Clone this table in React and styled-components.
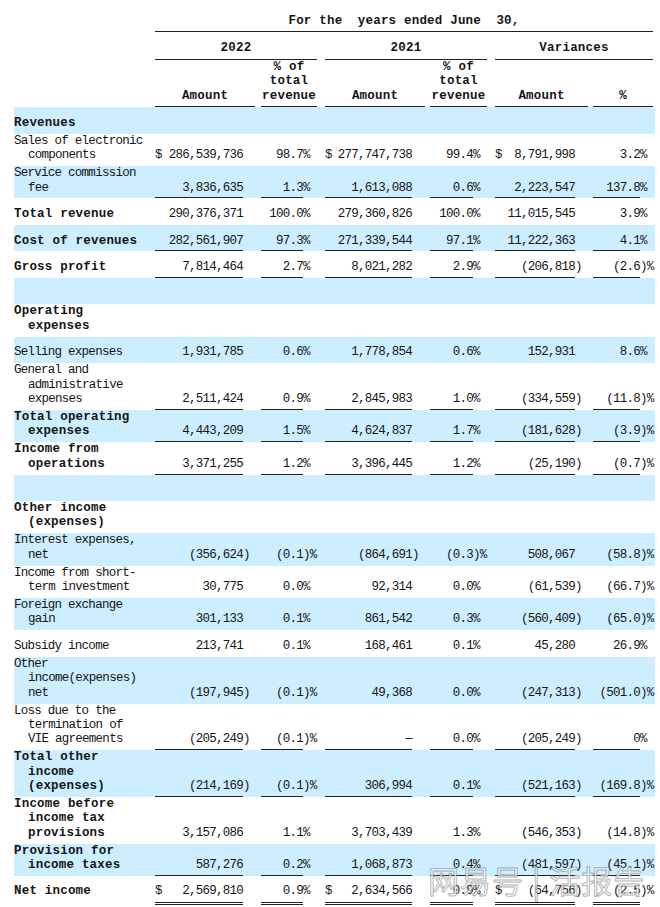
import React from "react";
import styled, { createGlobalStyle } from "styled-components";

const GlobalStyle = createGlobalStyle`
  html, body {
    margin: 0;
    padding: 0;
    background: #fff;
  }
  body {
    font-family: "Liberation Mono", "Courier New", monospace;
    color: #151515;
  }
`;

// label | 2022 amt | 2022 % | 2021 amt | 2021 % | var amt | var %
const COLS = "141px 100px 62px 108px 62px 101px 67px";

const Page = styled.div`
  position: relative;
  width: 660px;
  height: 907px;
  overflow: hidden;
  box-sizing: border-box;
  padding: 13.75px 0 0 14px;
  font-size: 12.5px;
  line-height: 14.4px;
`;

const Head = styled.div`
  display: grid;
  grid-template-columns: ${COLS};
  width: 641px;
  font-weight: bold;
  letter-spacing: 0.2px;
`;

const HeadCell = styled.div`
  grid-column: ${(p) => p.$span};
  grid-row: ${(p) => p.$row};
  margin-left: ${(p) => p.$gap || 0}px;
  margin-right: ${(p) => p.$end || 0}px;
  padding: ${(p) => p.$pad};
  border-bottom: 1px solid #222;
  display: flex;
  flex-direction: column;
  justify-content: flex-end;
  align-items: center;
  text-align: center;
  white-space: pre;
`;

const Row = styled.div`
  display: grid;
  grid-template-columns: ${COLS};
  width: 641px;
  min-height: ${(p) => p.$h}px;
  background: ${(p) => (p.$blue ? "#cceeff" : "transparent")};
`;

const Label = styled.div`
  align-self: end;
  padding-bottom: ${(p) => p.$pb}px;
  font-weight: ${(p) => (p.$bold ? "bold" : "normal")};
  letter-spacing: ${(p) => (p.$bold ? "0.2px" : "-0.74px")};
  white-space: nowrap;
`;

const LabelLine = styled.div`
  & + & {
    padding-left: 14px;
  }
`;

const Cell = styled.div`
  display: flex;
  margin-left: ${(p) => p.$gap}px;
  letter-spacing: -0.74px;
  white-space: nowrap;
`;

const Val = styled.div`
  flex: 1;
  min-width: 0;
  display: flex;
  justify-content: ${(p) => (p.$dollar ? "space-between" : "flex-end")};
  align-items: flex-end;
  padding-bottom: ${(p) => p.$pb}px;
  border-bottom: ${(p) =>
    p.$line === "double" ? "3px double #222" : p.$line ? "1px solid #222" : "none"};
`;

const Suffix = styled.div`
  width: ${(p) => p.$w}px;
  flex: none;
  display: flex;
  align-items: flex-end;
  padding-bottom: ${(p) => p.$pb}px;
`;

const Watermark = styled.div`
  position: absolute;
  left: 428px;
  top: 860px;
  font-family: "Noto Sans CJK SC", sans-serif;
  font-size: 31px;
  line-height: 40px;
  letter-spacing: 1px;
  color: rgba(255, 255, 255, 0.72);
  -webkit-text-stroke: 1px rgba(100, 100, 100, 0.5);
  white-space: pre;
  pointer-events: none;
`;

// gap before each value column, and width of its suffix slot
const SLOTS = [
  { gap: 0, suf: 12, pct: false },
  { gap: 6, suf: 14, pct: true },
  { gap: 8, suf: 13, pct: false },
  { gap: 5, suf: 14, pct: true },
  { gap: 8, suf: 13, pct: false },
  { gap: 5, suf: 15, pct: true },
];

const rows = [
  { label: ["Revenues"], bold: true, blue: true },
  {
    label: ["Sales of electronic", "components"],
    dollar: true,
    vals: ["286,539,736", "98.7%", "277,747,738", "99.4%", "8,791,998", "3.2%"],
  },
  {
    label: ["Service commission", "fee"],
    blue: true,
    line: "single",
    vals: ["3,836,635", "1.3%", "1,613,088", "0.6%", "2,223,547", "137.8%"],
  },
  {
    label: ["Total revenue"],
    bold: true,
    vals: ["290,376,371", "100.0%", "279,360,826", "100.0%", "11,015,545", "3.9%"],
  },
  {
    label: ["Cost of revenues"],
    bold: true,
    blue: true,
    line: "single",
    vals: ["282,561,907", "97.3%", "271,339,544", "97.1%", "11,222,363", "4.1%"],
  },
  {
    label: ["Gross profit"],
    bold: true,
    line: "single",
    vals: ["7,814,464", "2.7%", "8,021,282", "2.9%", "(206,818)", "(2.6)%"],
  },
  { label: [], blue: true },
  { label: ["Operating", "expenses"], bold: true },
  {
    label: ["Selling expenses"],
    blue: true,
    vals: ["1,931,785", "0.6%", "1,778,854", "0.6%", "152,931", "8.6%"],
  },
  {
    label: ["General and", "administrative", "expenses"],
    line: "single",
    vals: ["2,511,424", "0.9%", "2,845,983", "1.0%", "(334,559)", "(11.8)%"],
  },
  {
    label: ["Total operating", "expenses"],
    bold: true,
    blue: true,
    line: "single",
    vals: ["4,443,209", "1.5%", "4,624,837", "1.7%", "(181,628)", "(3.9)%"],
  },
  {
    label: ["Income from", "operations"],
    bold: true,
    line: "single",
    vals: ["3,371,255", "1.2%", "3,396,445", "1.2%", "(25,190)", "(0.7)%"],
  },
  { label: [], blue: true },
  { label: ["Other income", "(expenses)"], bold: true },
  {
    label: ["Interest expenses,", "net"],
    blue: true,
    vals: ["(356,624)", "(0.1)%", "(864,691)", "(0.3)%", "508,067", "(58.8)%"],
  },
  {
    label: ["Income from short-", "term investment"],
    vals: ["30,775", "0.0%", "92,314", "0.0%", "(61,539)", "(66.7)%"],
  },
  {
    label: ["Foreign exchange", "gain"],
    blue: true,
    vals: ["301,133", "0.1%", "861,542", "0.3%", "(560,409)", "(65.0)%"],
  },
  {
    label: ["Subsidy income"],
    vals: ["213,741", "0.1%", "168,461", "0.1%", "45,280", "26.9%"],
  },
  {
    label: ["Other", "income(expenses)", "net"],
    blue: true,
    vals: ["(197,945)", "(0.1)%", "49,368", "0.0%", "(247,313)", "(501.0)%"],
  },
  {
    label: ["Loss due to the", "termination of", "VIE agreements"],
    line: "single",
    vals: ["(205,249)", "(0.1)%", "—", "0.0%", "(205,249)", "0%"],
  },
  {
    label: ["Total other", "income", "(expenses)"],
    bold: true,
    blue: true,
    line: "single",
    vals: ["(214,169)", "(0.1)%", "306,994", "0.1%", "(521,163)", "(169.8)%"],
  },
  {
    label: ["Income before", "income tax", "provisions"],
    bold: true,
    vals: ["3,157,086", "1.1%", "3,703,439", "1.3%", "(546,353)", "(14.8)%"],
  },
  {
    label: ["Provision for", "income taxes"],
    bold: true,
    blue: true,
    line: "single",
    vals: ["587,276", "0.2%", "1,068,873", "0.4%", "(481,597)", "(45.1)%"],
  },
  {
    label: ["Net income"],
    bold: true,
    line: "double",
    dollar: true,
    vals: ["2,569,810", "0.9%", "2,634,566", "0.9%", "(64,756)", "(2.5)%"],
  },
];

function split(value, pct) {
  if (!value) return ["", ""];
  if (pct) {
    if (value.endsWith(")%")) return [value.slice(0, -2), ")%"];
    if (value.endsWith("%")) return [value.slice(0, -1), "%"];
    return [value, ""];
  }
  if (value.endsWith(")")) return [value.slice(0, -1), ")"];
  return [value, ""];
}

function DataRow({ row }) {
  const isNet = row.line === "double";
  const pb = isNet ? 6 : 3.5;
  const border = row.line === "double" ? 3 : row.line ? 1 : 0;
  return (
    <Row $blue={row.blue} $h={isNet ? 28.5 : 26.5}>
      <Label $bold={row.bold} $pb={pb}>
        {row.label.map((l) => (
          <LabelLine key={l}>{l}</LabelLine>
        ))}
      </Label>
      {SLOTS.map((slot, i) => {
        const [main, suf] = split(row.vals && row.vals[i], slot.pct);
        const dollar = row.dollar && !slot.pct;
        return (
          <Cell key={i} $gap={slot.gap}>
            <Val $line={row.vals ? row.line : null} $pb={pb - border} $dollar={dollar}>
              {dollar && <span>$</span>}
              <span>{main}</span>
            </Val>
            <Suffix $w={slot.suf} $pb={pb}>
              {suf}
            </Suffix>
          </Cell>
        );
      })}
    </Row>
  );
}

export default function App() {
  return (
    <Page>
      <GlobalStyle />
      <Head>
        <HeadCell $row="1" $span="2 / -1" $end={2} $pad="0 0 2.75px">
          {"For the  years ended June  30,"}
        </HeadCell>
        <HeadCell $row="2" $span="2 / 4" $pad="8.75px 0 3.75px">
          2022
        </HeadCell>
        <HeadCell $row="2" $span="4 / 6" $gap={8} $pad="8.75px 0 3.75px">
          2021
        </HeadCell>
        <HeadCell $row="2" $span="6 / 8" $gap={8} $end={2} $pad="8.75px 0 3.75px">
          Variances
        </HeadCell>
        <HeadCell $row="3" $span="2" $pad="0 0 3.25px">
          Amount
        </HeadCell>
        <HeadCell $row="3" $span="3" $gap={6} $pad="0 0 3.25px">
          {"% of\ntotal\nrevenue"}
        </HeadCell>
        <HeadCell $row="3" $span="4" $gap={8} $pad="0 0 3.25px">
          Amount
        </HeadCell>
        <HeadCell $row="3" $span="5" $gap={5} $pad="0 0 3.25px">
          {"% of\ntotal\nrevenue"}
        </HeadCell>
        <HeadCell $row="3" $span="6" $gap={8} $pad="0 0 3.25px">
          Amount
        </HeadCell>
        <HeadCell $row="3" $span="7" $gap={5} $end={2} $pad="0 0 3.25px">
          %
        </HeadCell>
      </Head>
      {rows.map((row, i) => (
        <DataRow key={i} row={row} />
      ))}
      <Watermark>{"网易号 | 活报告"}</Watermark>
    </Page>
  );
}
